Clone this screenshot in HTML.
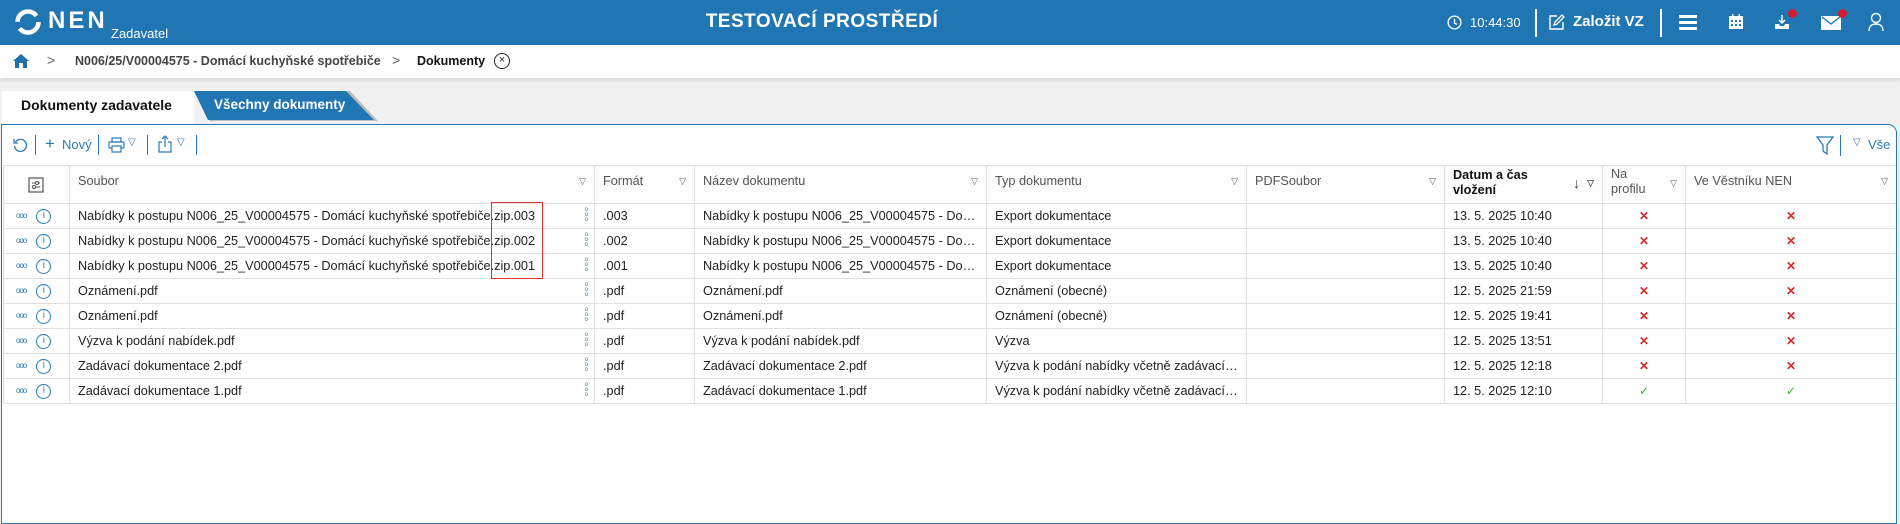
<!DOCTYPE html>
<html><head><meta charset="utf-8">
<style>
*{box-sizing:border-box;margin:0;padding:0}
body{width:1900px;height:512px;overflow:hidden;background:#f1f1f1;font-family:"Liberation Sans",sans-serif;color:#222;position:relative}
.hdr{position:absolute;left:0;top:0;width:1900px;height:45px;background:#2076b3;color:#fff}
.abs{position:absolute}
.bc{position:absolute;left:0;top:45px;width:1900px;height:33px;background:#fff;box-shadow:0 2px 4px rgba(0,0,0,.12);font-size:13px}
.panel{position:absolute;left:1px;top:124px;width:1896px;height:400px;background:#fff;border:1px solid #2a7ab8;border-radius:0 9px 0 0;overflow:hidden}
.tb{color:#2a7ab8;font-size:13px}
.sep{position:absolute;width:1px;background:#2a7ab8}
table{position:absolute;left:1px;top:40px;width:1893px;border-collapse:collapse;table-layout:fixed;font-size:12.7px}
td,th{border:1px solid #e0e0e0;height:25px;padding:0 8px;white-space:nowrap;overflow:hidden;text-overflow:ellipsis;text-align:left;font-weight:normal}
th{height:38px;color:#555;vertical-align:top;padding-top:8px;position:relative;background:#fcfcfc}
th .f{position:absolute;right:8px;top:10px;font-size:9px;color:#666}
.x{color:#d42a2a;text-align:center;font-weight:bold;font-size:12px}
.ok{color:#3cb043;text-align:center;font-size:12px}
.ic{color:#2a7ab8}
</style></head><body>
<div class="hdr">
 <svg class="abs" style="left:14px;top:8px" width="28" height="28" viewBox="0 0 28 28"><circle cx="14" cy="14" r="10.5" fill="none" stroke="#fff" stroke-width="4.5" stroke-dasharray="26 7"/></svg>
 <div class="abs" style="left:48px;top:7px;font-size:24px;font-weight:bold;letter-spacing:3px">NEN</div>
 <div class="abs" style="left:111px;top:26px;font-size:13px">Zadavatel</div>
 <div class="abs" style="left:0;width:1644px;text-align:center;top:11px;font-size:19px;font-weight:bold;letter-spacing:.5px">TESTOVACÍ PROSTŘEDÍ</div>
 <svg class="abs" style="left:1447px;top:15px" width="15" height="15" viewBox="0 0 16 16"><circle cx="8" cy="8" r="6.8" fill="none" stroke="#fff" stroke-width="1.4"/><path d="M8 4v4.5l2.5 1.5" fill="none" stroke="#fff" stroke-width="1.4"/></svg>
 <div class="abs" style="left:1470px;top:15px;font-size:13px">10:44:30</div>
 <div class="abs" style="left:1535px;top:9px;width:2px;height:28px;background:#fff"></div>
 <svg class="abs" style="left:1548px;top:14px" width="17" height="17" viewBox="0 0 17 17"><path d="M9 2H2v13h13V8" fill="none" stroke="#fff" stroke-width="1.4"/><path d="M6 11l1-3 7-7 2 2-7 7z" fill="none" stroke="#fff" stroke-width="1.3"/></svg>
 <div class="abs" style="left:1573px;top:13px;font-size:15px;font-weight:bold">Založit VZ</div>
 <div class="abs" style="left:1660px;top:9px;width:2px;height:28px;background:#fff"></div>
 <div class="abs" style="left:1679px;top:15px;width:18px;height:3px;background:#fff;box-shadow:0 6px 0 #fff,0 12px 0 #fff"></div>
 <svg class="abs" style="left:1727px;top:13px" width="18" height="18" viewBox="0 0 18 18"><rect x="2" y="3" width="14" height="13" fill="#fff"/><g fill="#2076b3"><rect x="4" y="7" width="2" height="2"/><rect x="8" y="7" width="2" height="2"/><rect x="12" y="7" width="2" height="2"/><rect x="4" y="11" width="2" height="2"/><rect x="8" y="11" width="2" height="2"/><rect x="12" y="11" width="2" height="2"/></g><rect x="5" y="1" width="1.5" height="4" fill="#fff"/><rect x="11.5" y="1" width="1.5" height="4" fill="#fff"/></svg>
 <svg class="abs" style="left:1773px;top:13px" width="18" height="18" viewBox="0 0 18 18"><path d="M9 2v8M6 7l3 3 3-3" fill="none" stroke="#fff" stroke-width="1.4"/><path d="M2 11h4l1 2h4l1-2h4v5H2z" fill="#fff"/></svg>
 <div class="abs" style="left:1788px;top:9px;width:9px;height:9px;border-radius:50%;background:#d11f2d"></div>
 <svg class="abs" style="left:1821px;top:16px" width="20" height="14" viewBox="0 0 20 14"><rect x="0" y="0" width="20" height="14" fill="#fff"/><path d="M1 1l9 7 9-7" fill="none" stroke="#2076b3" stroke-width="1.4"/></svg>
 <div class="abs" style="left:1838px;top:9px;width:9px;height:9px;border-radius:50%;background:#d11f2d"></div>
 <svg class="abs" style="left:1867px;top:12px" width="18" height="20" viewBox="0 0 18 20"><circle cx="9" cy="6" r="4.5" fill="none" stroke="#fff" stroke-width="1.4"/><path d="M2 19c0-5 3-7 7-7s7 2 7 7" fill="none" stroke="#fff" stroke-width="1.4"/></svg>
</div>
<div class="bc">
 <svg class="abs" style="left:12px;top:8px" width="18" height="16" viewBox="0 0 18 16"><path d="M9 1L1 8h2v7h4v-5h4v5h4V8h2z" fill="#1f6fae"/></svg>
 <div class="abs" style="left:47px;top:7px;color:#666;font-size:14px">&gt;</div>
 <div class="abs" style="left:75px;top:9px;color:#444;font-weight:bold;font-size:12.5px">N006/25/V00004575 - Domácí kuchyňské spotřebiče</div>
 <div class="abs" style="left:392px;top:7px;color:#666;font-size:14px">&gt;</div>
 <div class="abs" style="left:417px;top:9px;color:#111;font-weight:bold;font-size:12.5px">Dokumenty</div>
 <div class="abs" style="left:494px;top:8px;width:16px;height:16px;border:1.3px solid #222;border-radius:50%;font-size:11px;text-align:center;line-height:13px">×</div>
</div>
<div class="abs" style="left:2px;top:91px;width:192px;height:34px;background:#fff"></div>
<div class="abs" style="left:21px;top:97px;font-size:14px;font-weight:bold;color:#111">Dokumenty zadavatele</div>
<svg class="abs" style="left:194px;top:91px" width="186" height="30"><polygon points="0,0 156,0 184,30 16,30" fill="#bbb"/><polygon points="0,0 152,0 180,29 14,29" fill="#2076b3"/></svg>
<div class="abs" style="left:214px;top:97px;font-size:13.5px;font-weight:bold;color:#fff">Všechny dokumenty</div>
<div class="panel">
 <div class="tb">
  <svg class="abs" style="left:10px;top:12px" width="16" height="16" viewBox="0 0 16 16"><path d="M3.5 5A6 6 0 1 1 2.5 9" fill="none" stroke="#2a7ab8" stroke-width="1.3"/><path d="M2 2v4h4" fill="none" stroke="#2a7ab8" stroke-width="1.3"/></svg>
  <div class="sep" style="left:33px;top:10px;height:20px"></div>
  <div class="abs" style="left:43px;top:9px;font-size:17px">+</div>
  <div class="abs" style="left:60px;top:12px">Nový</div>
  <div class="sep" style="left:96px;top:10px;height:20px"></div>
  <svg class="abs" style="left:106px;top:12px" width="17" height="16" viewBox="0 0 17 16"><rect x="4" y="1" width="9" height="4" fill="none" stroke="#2a7ab8" stroke-width="1.2"/><rect x="1" y="5" width="15" height="6" rx="1" fill="none" stroke="#2a7ab8" stroke-width="1.2"/><rect x="4" y="9" width="9" height="6" fill="#fff" stroke="#2a7ab8" stroke-width="1.2"/></svg>
  <div class="abs" style="left:126px;top:12px;font-size:10px">▽</div>
  <div class="sep" style="left:145px;top:10px;height:20px"></div>
  <svg class="abs" style="left:155px;top:10px" width="16" height="18" viewBox="0 0 16 18"><path d="M5 7H2v10h12V7h-3M8 12V1M5 4l3-3 3 3" fill="none" stroke="#2a7ab8" stroke-width="1.2"/></svg>
  <div class="abs" style="left:175px;top:12px;font-size:10px">▽</div>
  <div class="sep" style="left:194px;top:10px;height:20px"></div>
  <svg class="abs" style="left:1814px;top:11px" width="18" height="19" viewBox="0 0 18 19"><path d="M1 1h16l-6 8v9l-4-3V9z" fill="none" stroke="#2a7ab8" stroke-width="1.3"/></svg>
  <div class="sep" style="left:1838px;top:10px;height:21px"></div>
  <div class="abs" style="left:1851px;top:12px;font-size:10px">▽</div>
  <div class="abs" style="left:1866px;top:12px">Vše</div>
 </div>
 <table>
  <colgroup><col style="width:66px"><col style="width:525px"><col style="width:100px"><col style="width:292px"><col style="width:260px"><col style="width:198px"><col style="width:158px"><col style="width:83px"><col style="width:211px"></colgroup>
  <tr>
   <th><svg style="position:absolute;left:24px;top:11px" width="16" height="16" viewBox="0 0 16 16"><rect x="1" y="1" width="14" height="14" fill="none" stroke="#555" stroke-width="1.2"/><path d="M4 6h8M4 10h8" stroke="#555"/><circle cx="9" cy="6" r="1.5" fill="#fff" stroke="#555"/><circle cx="6" cy="10" r="1.5" fill="#fff" stroke="#555"/></svg></th>
   <th>Soubor<span class="f">▽</span></th>
   <th>Formát<span class="f">▽</span></th>
   <th>Název dokumentu<span class="f">▽</span></th>
   <th>Typ dokumentu<span class="f">▽</span></th>
   <th>PDFSoubor<span class="f">▽</span></th>
   <th style="color:#111;font-weight:bold;padding-top:2px;line-height:15px">Datum a čas<br>vložení<span class="f" style="right:22px;top:10px;font-size:14px;color:#333">↓</span><span class="f">▽</span></th>
   <th style="padding-top:1px;line-height:15px">Na<br>profilu<span class="f">▽</span></th>
   <th>Ve Věstníku NEN<span class="f">▽</span></th>
  </tr>
 </table>
</div>
<div class="abs" style="left:491px;top:202px;width:52px;height:77px;border:1px solid #d33"></div>
<script>
var rows=[
["Nabídky k postupu N006_25_V00004575 - Domácí kuchyňské spotřebiče.zip.003",".003","Nabídky k postupu N006_25_V00004575 - Domácí kuchyňské spotřebiče","Export dokumentace","13. 5. 2025 10:40",0,0],
["Nabídky k postupu N006_25_V00004575 - Domácí kuchyňské spotřebiče.zip.002",".002","Nabídky k postupu N006_25_V00004575 - Domácí kuchyňské spotřebiče","Export dokumentace","13. 5. 2025 10:40",0,0],
["Nabídky k postupu N006_25_V00004575 - Domácí kuchyňské spotřebiče.zip.001",".001","Nabídky k postupu N006_25_V00004575 - Domácí kuchyňské spotřebiče","Export dokumentace","13. 5. 2025 10:40",0,0],
["Oznámení.pdf",".pdf","Oznámení.pdf","Oznámení (obecné)","12. 5. 2025 21:59",0,0],
["Oznámení.pdf",".pdf","Oznámení.pdf","Oznámení (obecné)","12. 5. 2025 19:41",0,0],
["Výzva k podání nabídek.pdf",".pdf","Výzva k podání nabídek.pdf","Výzva","12. 5. 2025 13:51",0,0],
["Zadávací dokumentace 2.pdf",".pdf","Zadávací dokumentace 2.pdf","Výzva k podání nabídky včetně zadávací dokumentace","12. 5. 2025 12:18",0,0],
["Zadávací dokumentace 1.pdf",".pdf","Zadávací dokumentace 1.pdf","Výzva k podání nabídky včetně zadávací dokumentace","12. 5. 2025 12:10",1,1]];
var h="";
rows.forEach(function(r){
 var m=function(v){return v?'<td class="ok">✓</td>':'<td class="x">✕</td>';};
 h+='<tr><td style="padding:0 0 0 12px;text-overflow:clip"><span class="ic" style="font-size:8px;letter-spacing:-1px;vertical-align:middle">ooo</span><span class="ic" style="display:inline-block;width:15px;height:15px;border:1.3px solid #2a7ab8;border-radius:50%;font-size:10px;text-align:center;line-height:12px;margin-left:10px;vertical-align:middle">i</span></td>'+
 '<td style="position:relative;padding-left:8px">'+r[0]+'<span class="ic" style="position:absolute;right:6px;top:4px;font-size:6px;line-height:5px">o<br>o<br>o</span></td><td>'+r[1]+'</td><td>'+r[2]+'</td><td>'+r[3]+'</td><td></td><td>'+r[4]+'</td>'+m(r[5])+m(r[6])+'</tr>';
});
document.querySelector('table').insertAdjacentHTML('beforeend',h);
</script>
</body></html>
